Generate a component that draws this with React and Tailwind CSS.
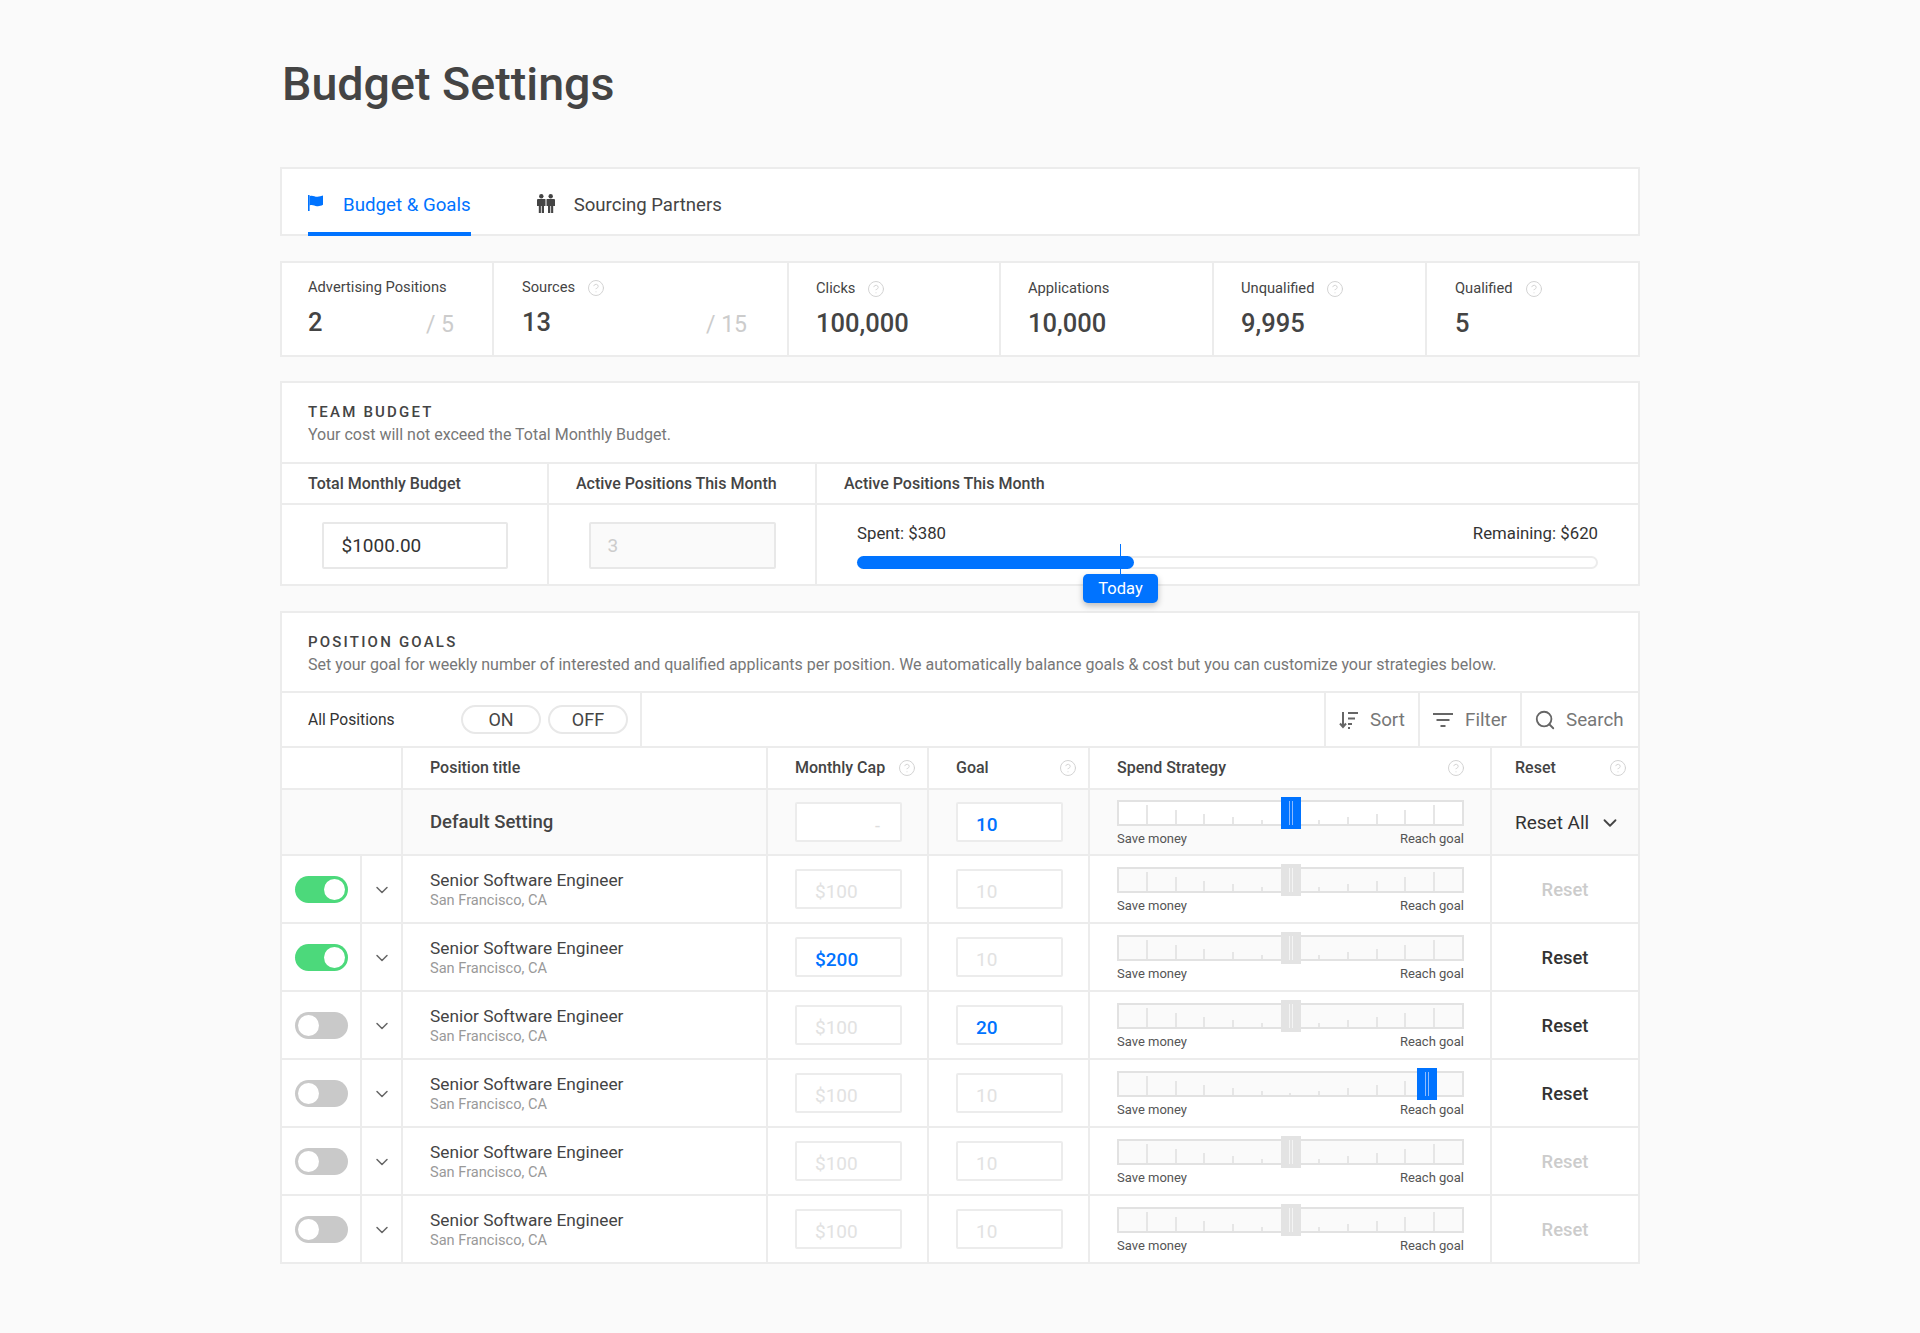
import { ChevronDown, CircleHelp, Search } from 'lucide-react'

const stats = [
    { label: 'Advertising Positions', value: '2', of: '/ 5', width: 'w-[212px]', pad: 'pl-[26px] pr-[38px]' },
    { label: 'Sources', help: true, value: '13', of: '/ 15', width: 'w-[295px]', pad: 'pl-7 pr-[40px]' },
    { label: 'Clicks', help: true, value: '100,000', width: 'w-[212px]', pad: 'pl-[27px]' },
    { label: 'Applications', value: '10,000', width: 'w-[213px]', pad: 'pl-[27px]' },
    { label: 'Unqualified', help: true, value: '9,995', width: 'w-[213px]', pad: 'pl-[27px]' },
    { label: 'Qualified', help: true, value: '5', width: 'flex-1', pad: 'pl-7' },
]

const rows = [
    { on: true, cap: '$100', goal: '10', handle: 'mid', reset: false },
    { on: true, cap: '$200', capActive: true, goal: '10', handle: 'mid', reset: true },
    { on: false, cap: '$100', goal: '20', goalActive: true, handle: 'mid', reset: true },
    { on: false, cap: '$100', goal: '10', handle: 'end', reset: true },
    { on: false, cap: '$100', goal: '10', handle: 'mid', reset: false },
    { on: false, cap: '$100', goal: '10', handle: 'mid', reset: false },
]

const ticks = ['h-[19px]', 'h-[14px]', 'h-[10px]', 'h-[7px]', 'h-1', 'h-0.5', 'h-1', 'h-[7px]', 'h-[10px]', 'h-[14px]', 'h-[19px]']

const gridCols = 'grid grid-cols-[121px_365px_161px_161px_402px_1fr]'

function Help({ className = '' }) {
    return <CircleHelp size={18} strokeWidth={1.3} className={`text-[#d2d2d2] ${className}`} />
}

function FlagIcon() {
    return (
        <svg width="17" height="17" viewBox="0 0 17 17" className="shrink-0 -translate-y-[2px]">
            <rect x="0" y="0" width="1.6" height="16" fill="#0073ff" />
            <path d="M1.6 1.2c3-1.6 5.2.9 8 .6 2-.2 3.6-.8 5.4-1.4v9.4c-2.2 1.2-4 1.6-6 1.4-2.6-.3-4.800-2.200-7.400-.8z" fill="#0073ff" />
        </svg>
    )
}

function PeopleIcon() {
    return (
        <svg width="18" height="19" viewBox="0 0 18 19" className="shrink-0 -translate-y-[2px]" fill="#444">
            <circle cx="4.300" cy="2.200" r="2.200" />
            <circle cx="13.700" cy="2.200" r="2.200" />
            <path d="M0 6a1 1 0 0 1 1-1h7a.500.500 0 0 1 .500.500v6.500H7V19H4.700v-7h-.8v7H1.800v-7H0z" />
            <path d="M9.500 5.500a.500.500 0 0 1 .500-.500h7a1 1 0 0 1 1 1v6h-1.800v7h-2.100v-7h-.8v7H11v-7H9.500z" />
        </svg>
    )
}

function SortIcon() {
    return (
        <svg width="20" height="20" viewBox="0 0 20 20" fill="none" stroke="#666" strokeWidth="2">
            <path d="M4 2v15M1 13.500l3 3.500 3-3.500" />
            <path d="M9 3h10M9 8.500h7M9 14h4M9 18h2" />
        </svg>
    )
}

function FilterIcon() {
    return (
        <svg width="20" height="16" viewBox="0 0 20 16" fill="none" stroke="#666" strokeWidth="2">
            <path d="M0 2h20M3.500 8h13M7.500 14h5" />
        </svg>
    )
}

function Toggle({ on }) {
    return (
        <div className={`flex h-[27px] w-[53px] items-center rounded-full px-[3px] ${on ? 'justify-end bg-[#4cd97b]' : 'justify-start bg-[#c9c9c9]'}`}>
            <div className="size-[21px] rounded-full bg-white" />
        </div>
    )
}

function CellInput({ value, active }) {
    return (
        <div className={`flex h-10 w-[107px] items-center rounded-[2px] border-2 border-[#ececec] bg-white pl-[18px] pt-[6px] text-[19px] ${active ? 'font-medium text-[#0073ff]' : 'text-[#e2e2e2]'}`}>
            {value}
        </div>
    )
}

function Slider({ handle, active, fill = 'bg-[#fafafa]' }) {
    const handlePos = handle === 'end' ? 'left-[298px]' : 'left-[162px]'
    return (
        <div className="w-[347px]">
            <div className={`relative h-[26px] border-2 border-[#e2e2e2] ${fill}`}>
                <div className="flex h-full items-end justify-between px-[27px]">
                    {ticks.map((h, i) => (
                        <div key={i} className={`w-0.5 bg-[#e6e6e6] ${h}`} />
                    ))}
                </div>
                <div className={`absolute -top-[5px] flex h-8 w-5 justify-center gap-[2px] py-1 ${handlePos} ${active ? 'bg-[#0073ff]' : 'bg-[#e3e3e3]'}`}>
                    <div className={`w-px ${active ? 'bg-[#8dbbff]' : 'bg-[#f4f4f4]'}`} />
                    <div className={`w-px ${active ? 'bg-[#8dbbff]' : 'bg-[#f4f4f4]'}`} />
                </div>
            </div>
            <div className="mt-1 flex justify-between text-[13px] leading-[18px] text-[#555]">
                <span>Save money</span>
                <span>Reach goal</span>
            </div>
        </div>
    )
}

function ToolButton({ icon, label, width, gap = 'gap-[11px]', pad = 'pl-[13px]' }) {
    return (
        <div className={`flex h-full items-center border-l-2 border-[#ececec] pt-px text-[18.8px] text-[#777] ${pad} ${gap} ${width}`}>
            {icon}
            <span>{label}</span>
        </div>
    )
}

export default function App() {
    return (
        <div className="min-h-screen bg-[#fafafa] pb-[68px] font-[Roboto,sans-serif] text-[#333]">
            <div className="mx-auto w-[1360px]">
                <h1 className="pl-0.5 pt-[49px] pb-[48px] text-[46.6px] font-medium leading-[70px] text-[#444]">Budget Settings</h1>

                {/* tabs */}
                <div className="flex h-[69px] gap-[66px] border-2 border-[#ececec] bg-white pl-[26px]">
                    <div className="flex h-[67px] items-center gap-[18px] border-b-4 border-[#0073ff] pt-[10px] text-[18.7px] text-[#0073ff]">
                        <FlagIcon />
                        <span>Budget &amp; Goals</span>
                    </div>
                    <div className="flex h-[67px] items-center gap-[19px] pt-[6px] text-[18.6px] text-[#444]">
                        <PeopleIcon />
                        <span>Sourcing Partners</span>
                    </div>
                </div>

                {/* stats */}
                <div className="mt-[25px] flex h-24 border-2 border-[#ececec] bg-white">
                    {stats.map((s, i) => (
                        <div key={s.label} className={`flex flex-col justify-center gap-2 pt-px ${s.width} ${s.pad} ${i < stats.length - 1 ? 'border-r-2 border-[#ececec]' : ''}`}>
                            <div className="flex h-[18px] items-center gap-3 text-[14.7px] text-[#444]">
                                <span>{s.label}</span>
                                {s.help && <Help />}
                            </div>
                            <div className="flex items-baseline justify-between leading-[34px]">
                                <span className="text-[25.500px] font-medium text-[#444]">{s.value}</span>
                                {s.of && <span className="translate-y-px text-[23px] text-[#ccc]">{s.of}</span>}
                            </div>
                        </div>
                    ))}
                </div>

                {/* team budget */}
                <div className="mt-6 border-2 border-[#ececec] bg-white">
                    <div className="flex h-[81px] flex-col justify-center border-b-2 border-[#ececec] pl-[26px] pt-[2px]">
                        <div className="text-[15px] font-medium leading-[22px] tracking-[2.2px] text-[#444]">TEAM BUDGET</div>
                        <div className="mt-px text-[16px] leading-[22px] text-[#777]">Your cost will not exceed the Total Monthly Budget.</div>
                    </div>
                    <div className="grid grid-cols-[267px_268px_1fr]">
                        <div className="flex h-[41px] items-center border-b-2 border-r-2 border-[#ececec] pl-[26px] text-[16px] font-medium text-[#444]">Total Monthly Budget</div>
                        <div className="flex h-[41px] items-center border-b-2 border-r-2 border-[#ececec] pl-[27px] text-[16px] font-medium text-[#444]">Active Positions This Month</div>
                        <div className="flex h-[41px] items-center border-b-2 border-[#ececec] pl-[27px] text-[16px] font-medium text-[#444]">Active Positions This Month</div>

                        <div className="flex h-[79px] items-start justify-center border-r-2 border-[#ececec] pt-[17px]">
                            <div className="flex h-[47px] w-[186px] items-center rounded-[2px] border-2 border-[#e8e8e8] bg-white pl-[18px] pt-[2px] text-[19px] text-[#333]">$1000.00</div>
                        </div>
                        <div className="flex h-[79px] items-start justify-center border-r-2 border-[#ececec] pt-[17px]">
                            <div className="flex h-[47px] w-[187px] items-center rounded-[2px] border-2 border-[#e8e8e8] bg-[#fafafa] pl-[17px] pt-[2px] text-[19px] text-[#ccc]">3</div>
                        </div>
                        <div className="h-[79px] px-10 pt-[17px]">
                            <div className="flex justify-between text-[16.8px] leading-[22px] text-[#333]">
                                <span>Spent: $380</span>
                                <span>Remaining: $620</span>
                            </div>
                            <div className="relative mt-3 h-[13px] rounded-full border-2 border-[#ececec] bg-white">
                                <div className="-m-0.5 h-[13px] w-[277px] rounded-full bg-[#0073ff]" />
                                <div className="absolute -top-[14px] left-[261px] h-[31px] w-px bg-[#0073ff]" />
                                <div className="absolute left-[224px] top-[16px] flex h-[29px] w-[75px] items-center justify-center rounded-[5px] bg-[#0073ff] pt-px text-[16.5px] text-white shadow-[0_3px_6px_rgba(0,0,0,0.25)]">Today</div>
                            </div>
                        </div>
                    </div>
                </div>

                {/* position goals */}
                <div className="mt-[25px] border-2 border-[#ececec] bg-white">
                    <div className="flex h-[80px] flex-col justify-center border-b-2 border-[#ececec] pl-[26px] pt-[2px]">
                        <div className="text-[15px] font-medium leading-[22px] tracking-[2.2px] text-[#444]">POSITION GOALS</div>
                        <div className="mt-px text-[16px] leading-[22px] text-[#777]">Set your goal for weekly number of interested and qualified applicants per position. We automatically balance goals &amp; cost but you can customize your strategies below.</div>
                    </div>

                    <div className="flex h-[55px] items-center border-b-2 border-[#ececec]">
                        <div className="flex h-full w-[360px] items-center border-r-2 border-[#ececec] pl-[26px]">
                            <span className="w-[153px] pt-[3px] text-[15.6px] text-[#333]">All Positions</span>
                            <div className="flex h-[29px] w-[80px] items-center justify-center rounded-full border-2 border-[#e8e8e8] text-[18px] text-[#444]">ON</div>
                            <div className="ml-[7px] flex h-[29px] w-[80px] items-center justify-center rounded-full border-2 border-[#e8e8e8] text-[18px] text-[#444]">OFF</div>
                        </div>
                        <div className="ml-auto flex h-full">
                            <ToolButton icon={<SortIcon />} label="Sort" width="w-[94px]" />
                            <ToolButton icon={<FilterIcon />} label="Filter" width="w-[102px]" gap="gap-3" />
                            <ToolButton icon={<Search size={22} strokeWidth={2} className="text-[#666]" />} label="Search" width="w-[118px]" gap="gap-[10px]" pad="pl-3" />
                        </div>
                    </div>

                    {/* table head */}
                    <div className={`${gridCols} h-[42px] border-b-2 border-[#ececec] text-[16px] font-medium text-[#444]`}>
                        <div className="border-r-2 border-[#ececec]" />
                        <div className="flex items-center border-r-2 border-[#ececec] pl-[27px]">Position title</div>
                        <div className="flex items-center justify-between border-r-2 border-[#ececec] pl-[27px] pr-[11px]">Monthly Cap<Help /></div>
                        <div className="flex items-center justify-between border-r-2 border-[#ececec] pl-[27px] pr-[11px]">Goal<Help /></div>
                        <div className="flex items-center justify-between border-r-2 border-[#ececec] pl-[27px] pr-[25px]">Spend Strategy<Help /></div>
                        <div className="flex items-center justify-between pl-[23px] pr-[11px]">Reset<Help /></div>
                    </div>

                    {/* default row */}
                    <div className={`${gridCols} h-[66px] border-b-2 border-[#ececec] bg-[#fafafa]`}>
                        <div className="border-r-2 border-[#ececec]" />
                        <div className="flex items-center border-r-2 border-[#ececec] pl-[27px] pt-[2px] text-[18.5px] font-medium text-[#444]">Default Setting</div>
                        <div className="flex items-center border-r-2 border-[#ececec] pl-[27px]">
                            <div className="flex h-10 w-[107px] items-center justify-end rounded-[2px] border-2 border-[#ececec] bg-white pr-[20px] pt-[6px] text-[18px] text-[#ddd]">-</div>
                        </div>
                        <div className="flex items-center border-r-2 border-[#ececec] pl-[27px]">
                            <CellInput value="10" active />
                        </div>
                        <div className="border-r-2 border-[#ececec] pl-[27px] pt-[10px]">
                            <Slider handle="mid" active fill="bg-white" />
                        </div>
                        <div className="flex items-center pl-[23px] pt-[2px] text-[19px] text-[#333]">
                            <span>Reset All</span>
                            <ChevronDown size={22} strokeWidth={2} className="ml-[10px] text-[#444]" />
                        </div>
                    </div>

                    {rows.map((r, i) => (
                        <div key={i} className={`${gridCols} ${i < rows.length - 1 ? 'h-[68px] border-b-2 border-[#ececec]' : 'h-[66px]'}`}>
                            <div className="flex border-r-2 border-[#ececec]">
                                <div className="flex w-[80px] items-center justify-center border-r-2 border-[#ececec] pl-[1px]">
                                    <Toggle on={r.on} />
                                </div>
                                <div className="flex flex-1 items-center justify-center pt-px">
                                    <ChevronDown size={20} strokeWidth={1.8} className="text-[#666]" />
                                </div>
                            </div>
                            <div className="flex flex-col justify-center border-r-2 border-[#ececec] pl-[27px]">
                                <div className="text-[17.3px] leading-[21px] text-[#444]">Senior Software Engineer</div>
                                <div className="text-[14.6px] leading-[18px] text-[#999]">San Francisco, CA</div>
                            </div>
                            <div className="flex items-center border-r-2 border-[#ececec] pl-[27px]">
                                <CellInput value={r.cap} active={r.capActive} />
                            </div>
                            <div className="flex items-center border-r-2 border-[#ececec] pl-[27px]">
                                <CellInput value={r.goal} active={r.goalActive} />
                            </div>
                            <div className="border-r-2 border-[#ececec] pl-[27px] pt-[11px]">
                                <Slider handle={r.handle} active={r.handle === 'end'} />
                            </div>
                            <div className={`flex items-center justify-center pt-px text-[18.4px] font-medium ${r.reset ? 'text-[#333]' : 'text-[#ccc]'}`}>Reset</div>
                        </div>
                    ))}
                </div>
            </div>
        </div>
    )
}
